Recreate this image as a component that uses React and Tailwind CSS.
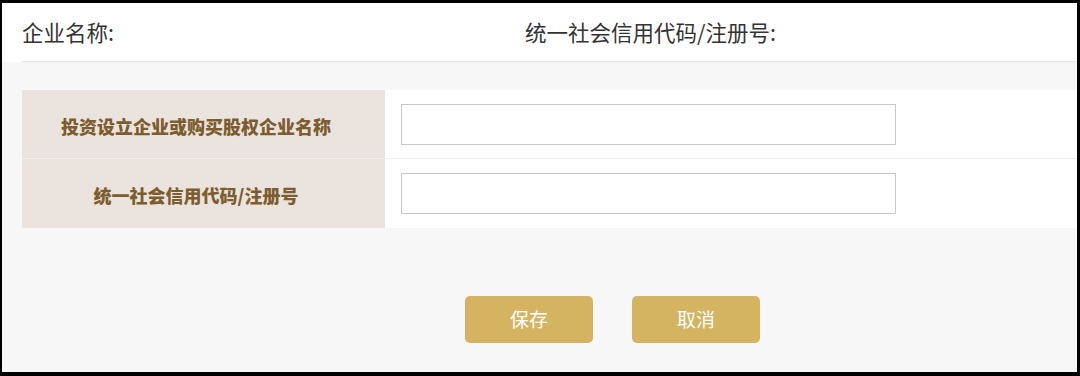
import React from 'react';

const rows = [
    { label: '投资设立企业或购买股权企业名称' },
    { label: '统一社会信用代码/注册号' },
];

const App = () => {
    return (
        <div
            className="w-[1080px] h-[376px] bg-black pt-[3px] pl-[2px] pr-[3px] pb-[4px]"
            style={{ fontFamily: '"Noto Sans CJK SC", "Noto Sans", sans-serif' }}
        >
            <div className="h-full bg-[#f7f7f7] flex flex-col">
                <div className="bg-white h-[59px] pl-[20px]">
                    <div className="h-full flex items-center border-b border-[#e6e6e6] text-[21.5px] text-[#333]">
                        <span className="w-[503px]">企业名称:</span>
                        <span>统一社会信用代码/注册号:</span>
                    </div>
                </div>

                <div className="mt-[28px] ml-[20px]">
                    {rows.map((row, i) => (
                        <div
                            key={i}
                            className={`flex h-[69px] ${i === 0 ? 'border-b border-[#f0f0f0]' : ''}`}
                        >
                            <div className="w-[363px] bg-[#ebe4de] flex items-center justify-center pr-[15px] pt-[4px] text-[18px] font-black text-[#7d5c2f]">
                                {row.label}
                            </div>
                            <div className="flex-1 bg-white flex items-center pl-[16px]">
                                <input
                                    type="text"
                                    className="w-[495px] h-[41px] border border-[#c8c8c8] bg-white outline-none"
                                />
                            </div>
                        </div>
                    ))}
                </div>

                <div className="mt-[68px] flex gap-[39px] pl-[463px]">
                    <button className="w-[128px] h-[47px] rounded-[5px] bg-[#d4b461] text-white text-[19px]">
                        保存
                    </button>
                    <button className="w-[128px] h-[47px] rounded-[5px] bg-[#d4b461] text-white text-[19px]">
                        取消
                    </button>
                </div>
            </div>
        </div>
    );
};

export default App;
